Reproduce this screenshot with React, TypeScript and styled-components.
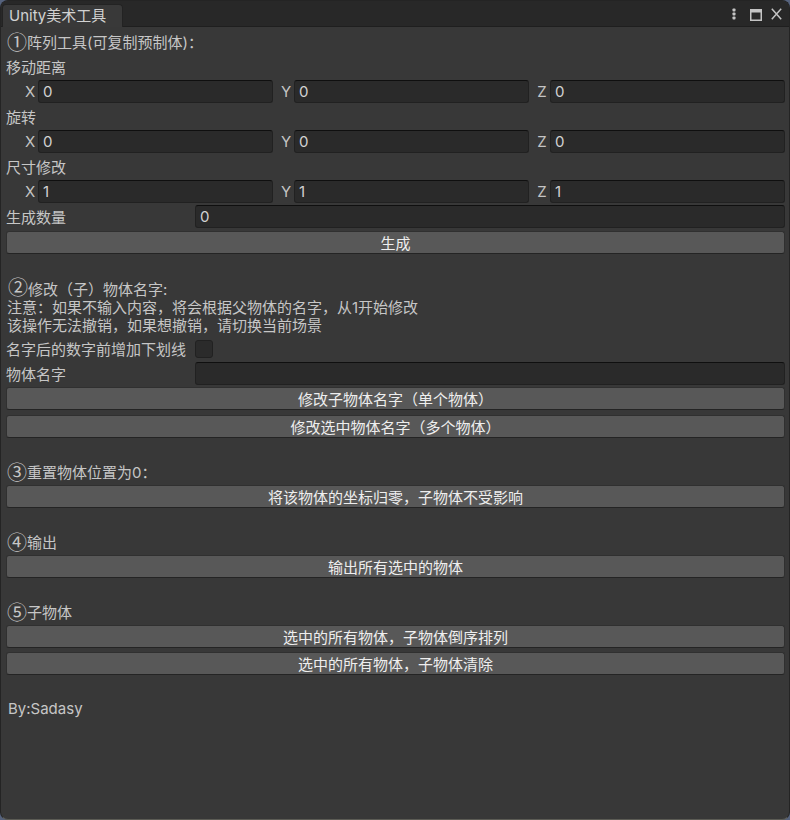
import React from "react";
import styled, { createGlobalStyle } from "styled-components";

const GlobalStyle = createGlobalStyle`
  html, body { margin: 0; padding: 0; background: #55627c; }
  body {
    width: 790px; height: 820px; overflow: hidden;
    font-family: Inter, "Noto Sans CJK SC", sans-serif;
    -webkit-font-smoothing: antialiased;
  }
`;

const Window = styled.div`
  width: 790px;
  height: 820px;
  box-sizing: border-box;
  background: #383838;
  border: 1px solid #242424;
  border-bottom-color: #5c5c55;
  border-radius: 8px;
  overflow: hidden;
  display: flex;
  flex-direction: column;
`;

const TabBar = styled.div`
  height: 26px;
  box-sizing: border-box;
  background: #282828;
  border-bottom: 1px solid #1f1f1f;
  display: flex;
  align-items: flex-end;
`;

const Tab = styled.div`
  margin-left: 1px;
  margin-bottom: -1px;
  width: 121px;
  height: 23px;
  box-sizing: border-box;
  background: #393939;
  border-radius: 4px 4px 0 0;
  border: 1px solid #232323;
  border-bottom: none;
  color: #d2d2d2;
  font-size: 15px;
  line-height: 21px;
  padding-left: 6px;
  white-space: nowrap;
`;

const TabIcons = styled.div`
  margin-left: auto;
  margin-right: 7px;
  align-self: stretch;
  display: flex;
  align-items: flex-start;
  padding-top: 7px;
`;

const IconGap = styled.div<{ $w: number }>`
  width: ${(p) => p.$w}px;
`;

const Content = styled.div`
  display: flex;
  flex-direction: column;
  padding: 3px 4px 0 5px;
  color: #c6c6c6;
  font-size: 15px;
`;

const Row = styled.div<{ $mt?: number; $pl?: number }>`
  height: 23px;
  margin-top: ${(p) => p.$mt ?? 2}px;
  padding-left: ${(p) => p.$pl ?? 0}px;
  display: flex;
  align-items: center;
  white-space: nowrap;
  &:first-child { margin-top: 0; }
`;

const Circled = styled.span`
  font-family: "Noto Sans CJK SC", sans-serif;
  font-size: 20px;
  line-height: 15px;
  margin-left: 1px;
`;

const Note = styled.div<{ $mt?: number }>`
  margin-top: ${(p) => p.$mt ?? 2}px;
  height: 54px;
  line-height: 18px;
  padding-left: 1px;
  white-space: nowrap;
`;

const VectorRow = styled.div`
  height: 23px;
  margin-top: 2px;
  padding-left: 16px;
  display: grid;
  grid-template-columns: repeat(3, 1fr);
  column-gap: 5px;
`;

const Axis = styled.div`
  display: flex;
  align-items: stretch;
`;

const AxisLabel = styled.span`
  width: 16px;
  flex: none;
  display: flex;
  align-items: center;
  justify-content: center;
  color: #c4c4c4;
`;

const Field = styled.div`
  flex: 1;
  height: 23px;
  box-sizing: border-box;
  background: #2a2a2a;
  border: 1px solid #212121;
  border-top-color: #0f0f0f;
  border-radius: 3px;
  color: #d2d2d2;
  padding-left: 4px;
  display: flex;
  align-items: center;
`;

const FieldLabel = styled.span`
  width: 189px;
  flex: none;
`;

const Checkbox = styled.div`
  width: 18px;
  height: 18px;
  box-sizing: border-box;
  background: #2b2b2b;
  border: 1px solid #212121;
  border-radius: 3px;
`;

const Button = styled.div<{ $mt?: number }>`
  height: 23px;
  margin-top: ${(p) => p.$mt ?? 2}px;
  box-sizing: border-box;
  background: #585858;
  border: 1px solid #303030;
  border-bottom-color: #242424;
  border-radius: 3px;
  color: #eeeeee;
  display: flex;
  align-items: center;
  justify-content: center;
  white-space: nowrap;
`;

const Kebab = () => (
  <svg width="4" height="12" viewBox="0 0 4 12">
    <rect x="0.5" y="0.5" width="3" height="3" rx="0.8" fill="#c4c4c4" />
    <rect x="0.5" y="4.5" width="3" height="3" rx="0.8" fill="#c4c4c4" />
    <rect x="0.5" y="8.5" width="3" height="3" rx="0.8" fill="#c4c4c4" />
  </svg>
);

const Maximize = () => (
  <svg width="12" height="12" viewBox="0 0 12 12" style={{ marginTop: 1 }}>
    <rect x="0.75" y="0.75" width="10.5" height="10.5" fill="none" stroke="#c4c4c4" strokeWidth="1.5" />
    <rect x="0" y="0" width="12" height="3.5" fill="#c4c4c4" />
  </svg>
);

const Close = () => (
  <svg width="11" height="12" viewBox="0 0 11 12">
    <path d="M0.8 0.8 L10.2 11.2 M10.2 0.8 L0.8 11.2" stroke="#c4c4c4" strokeWidth="1.5" fill="none" />
  </svg>
);

const Vector = ({ v }: { v: string }) => (
  <VectorRow>
    {["X", "Y", "Z"].map((a) => (
      <Axis key={a}>
        <AxisLabel>{a}</AxisLabel>
        <Field>{v}</Field>
      </Axis>
    ))}
  </VectorRow>
);

export default function App() {
  return (
    <>
      <GlobalStyle />
      <Window>
        <TabBar>
          <Tab>Unity美术工具</Tab>
          <TabIcons>
            <Kebab />
            <IconGap $w={14} />
            <Maximize />
            <IconGap $w={9} />
            <Close />
          </TabIcons>
        </TabBar>
        <Content>
          <Row>
            <Circled>①</Circled>阵列工具(可复制预制体)：
          </Row>
          <Row>移动距离</Row>
          <Vector v="0" />
          <Row>旋转</Row>
          <Vector v="0" />
          <Row>尺寸修改</Row>
          <Vector v="1" />
          <Row>
            <FieldLabel>生成数量</FieldLabel>
            <Field>0</Field>
          </Row>
          <Button $mt={3}>生成</Button>

          <Note $mt={25}>
            <Circled>②</Circled>修改（子）物体名字:
            <br />
            注意：如果不输入内容，将会根据父物体的名字，从1开始修改
            <br />
            该操作无法撤销，如果想撤销，请切换当前场景
          </Note>
          <Row $mt={4}>
            <FieldLabel>名字后的数字前增加下划线</FieldLabel>
            <Checkbox />
          </Row>
          <Row>
            <FieldLabel>物体名字</FieldLabel>
            <Field />
          </Row>
          <Button>修改子物体名字（单个物体）</Button>
          <Button $mt={5}>修改选中物体名字（多个物体）</Button>

          <Row $mt={22}>
            <Circled>③</Circled>重置物体位置为0：
          </Row>
          <Button>将该物体的坐标归零，子物体不受影响</Button>

          <Row $mt={22}>
            <Circled>④</Circled>输出
          </Row>
          <Button>输出所有选中的物体</Button>

          <Row $mt={22}>
            <Circled>⑤</Circled>子物体
          </Row>
          <Button>选中的所有物体，子物体倒序排列</Button>
          <Button $mt={4}>选中的所有物体，子物体清除</Button>

          <Row $mt={22} $pl={2}>By:Sadasy</Row>
        </Content>
      </Window>
    </>
  );
}
